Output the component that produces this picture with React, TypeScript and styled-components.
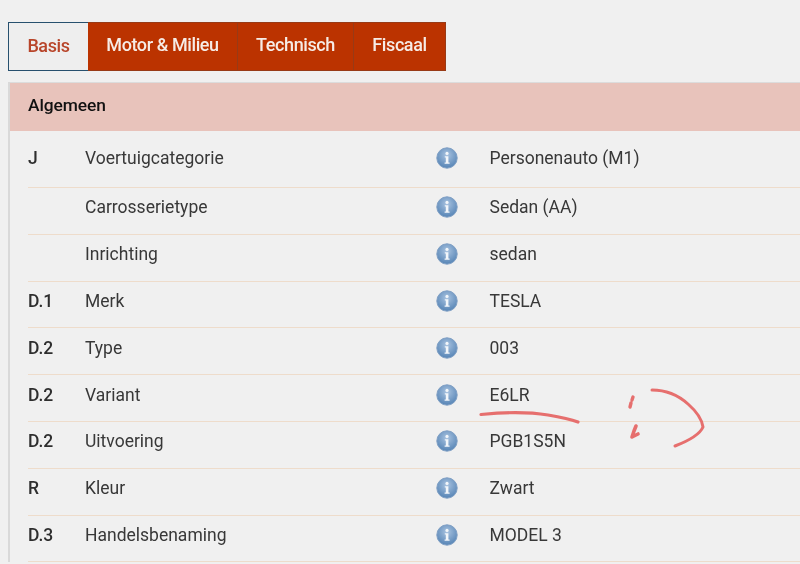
import React from "react";
import styled, { createGlobalStyle } from "styled-components";

const Global = createGlobalStyle`
  html, body { margin: 0; padding: 0; background: #f0f0f0; overflow: hidden; }
  body { font-family: Roboto, "Liberation Sans", sans-serif; }
  #root { width: 800px; height: 564px; overflow: hidden; }
`;

const Page = styled.div`
  position: relative;
  width: 800px;
  height: 564px;
  padding: 22px 0 0 8px;
  box-sizing: border-box;
  overflow: hidden;
  background: #f0f0f0;
  filter: blur(0.45px);
`;

const Tabs = styled.div`
  display: flex;
  height: 49px;
  margin-bottom: 11px;
`;

const Tab = styled.div<{ $active?: boolean; $w: number }>`
  box-sizing: border-box;
  display: flex;
  align-items: center;
  justify-content: center;
  width: ${(p) => p.$w}px;
  padding-bottom: ${(p) => (p.$active ? 2 : 4)}px;
  font-size: 18px;
  font-weight: 500;
  letter-spacing: -0.4px;
  color: ${(p) => (p.$active ? "#b8452a" : "#f6ece6")};
  background: ${(p) => (p.$active ? "#eeeeee" : "#bb3300")};
  border: 1px solid ${(p) => (p.$active ? "#27506e" : "#983a16")};
  border-left-width: ${(p) => (p.$active ? 1 : 0)}px;
  ${(p) => (p.$active ? "border-right: 0;" : "")}
`;

const Panel = styled.div`
  border-left: 2px solid #d9d9d9;
  margin-right: -10px;
`;

const Header = styled.div`
  box-sizing: border-box;
  height: 49px;
  display: flex;
  align-items: center;
  padding: 0 0 4px 18px;
  background: #e8c3bb;
  border-top: 1px solid #dcdcdc;
  font-size: 17.4px;
  font-weight: 500;
  letter-spacing: -0.1px;
  color: #111;
`;

const Rows = styled.div`
  padding-left: 18px;
`;

const Row = styled.div<{ $first?: boolean }>`
  box-sizing: border-box;
  display: grid;
  grid-template-columns: 57px 351px 53.5px 1fr;
  align-items: center;
  height: ${(p) => (p.$first ? 57 : 46.8)}px;
  padding-bottom: ${(p) => (p.$first ? 2 : 7)}px;
  border-bottom: 1px solid #eedccb;
  font-size: 17.5px;
  color: #383838;
`;

const Code = styled.span`
  font-weight: 500;
  color: #2e2e2e;
`;

const InfoWrap = styled.span`
  display: flex;
  width: 22px;
  height: 22px;
`;

const Scribble = styled.svg`
  position: absolute;
  left: 0;
  top: 0;
  pointer-events: none;
`;

const InfoIcon = ({ id }: { id: string }) => (
  <InfoWrap>
    <svg width="22" height="22" viewBox="0 0 22 22">
      <defs>
        <radialGradient id={id} cx="50%" cy="35%" r="70%">
          <stop offset="0%" stopColor="#a9c3e0" />
          <stop offset="100%" stopColor="#4f7fb2" />
        </radialGradient>
      </defs>
      <circle cx="11" cy="11" r="10.2" fill={`url(#${id})`} stroke="#7f9fc4" strokeWidth="1" />
      <circle cx="11" cy="6.4" r="1.6" fill="#f2f6fa" />
      <path d="M8.8 9.2h3.6v6.2h1.2v1.3H8.6v-1.3h1.2v-4.9H8.8z" fill="#f2f6fa" />
    </svg>
  </InfoWrap>
);

const data: [string, string, string][] = [
  ["J", "Voertuigcategorie", "Personenauto (M1)"],
  ["", "Carrosserietype", "Sedan (AA)"],
  ["", "Inrichting", "sedan"],
  ["D.1", "Merk", "TESLA"],
  ["D.2", "Type", "003"],
  ["D.2", "Variant", "E6LR"],
  ["D.2", "Uitvoering", "PGB1S5N"],
  ["R", "Kleur", "Zwart"],
  ["D.3", "Handelsbenaming", "MODEL 3"],
];

export default function App() {
  return (
    <Page>
      <Global />
      <Tabs>
        <Tab $active $w={80}>Basis</Tab>
        <Tab $w={150}>Motor &amp; Milieu</Tab>
        <Tab $w={116}>Technisch</Tab>
        <Tab $w={92}>Fiscaal</Tab>
      </Tabs>
      <Panel>
        <Header>Algemeen</Header>
        <Rows>
          {data.map((r, i) => (
            <Row key={i} $first={i === 0}>
              <Code>{r[0]}</Code>
              <span>{r[1]}</span>
              <InfoIcon id={`info-${i}`} />
              <span>{r[2]}</span>
            </Row>
          ))}
        </Rows>
      </Panel>
      <Scribble width="800" height="564" viewBox="0 0 800 564" fill="none" stroke="#e66f6e" strokeLinecap="round" strokeLinejoin="round">
        <path d="M481 414.5C505 412 530 412 548 415C560 417 570 419 578 422" strokeWidth="3.2" />
        <path d="M633 397L632 400M631 403L630 407" strokeWidth="3.4" />
        <path d="M636 426L634 431L632 437L638 434" strokeWidth="3.6" />
        <path d="M652 390C665 390 678 395 688 404C696 411 702 420 703 427C700 434 688 441 675 446" strokeWidth="3" />
      </Scribble>
    </Page>
  );
}
